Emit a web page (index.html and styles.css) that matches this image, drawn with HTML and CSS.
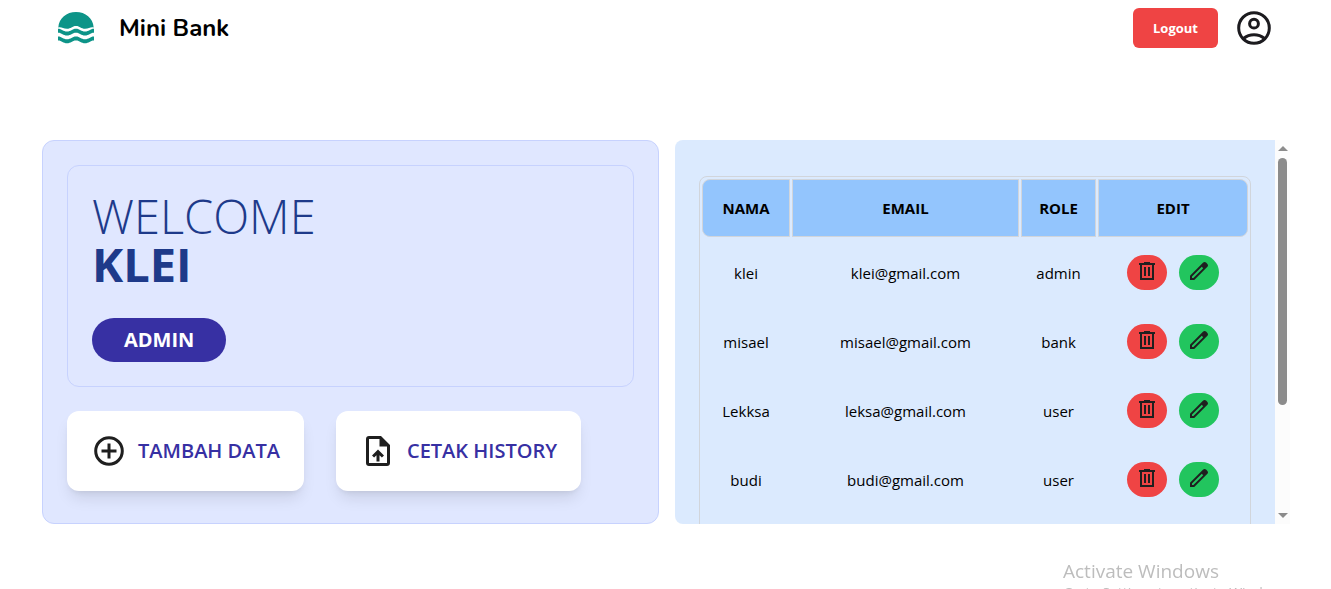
FILE: index.html
```html
<!DOCTYPE html>
<html lang="id">
<head>
<meta charset="utf-8">
<meta name="viewport" content="width=device-width, initial-scale=1">
<title>Mini Bank</title>
<link rel="stylesheet" href="styles.css">
</head>
<body>
<svg class="defs" aria-hidden="true">
  <symbol id="trash" viewBox="0 0 24 24"><path d="M5 21V6H4V4h5V3h6v1h5v2h-1v15H5zM7 19h10V6H7v13zM9 17h2V8H9v9zM13 17h2V8h-2v9z" fill-rule="evenodd"/></symbol>
  <symbol id="pencil" viewBox="0 0 24 24"><path d="M5 19h1.400l9.800-9.800-1.400-1.400L5 17.600V19zm-2 2v-4.250L16.200 3.575c.8-.75 2-.75 2.825 0L20.400 5c.8.8.8 2 0 2.800L7.250 21H3z" fill-rule="evenodd"/></symbol>
</svg>
<header class="navbar">
  <a class="brand" href="#">
    <svg class="logo" viewBox="0 0 36 32" fill="#0d9488" aria-hidden="true">
      <path d="M0.300 15.500C1 6 8.500 0 18 0S35 6 35.700 15.500C32.500 14.500 31 16.800 27 16.800S22 14 18 14 13 16.800 9 16.800 3.500 14.500 0.300 15.500Z"/>
      <path d="M0 16.800C4 16.800 5 19.600 9 19.600S14 16.800 18 16.800 23 19.600 27 19.600 32 16.800 36 16.800V20.800C32 20.800 31 23.600 27 23.600S22 20.800 18 20.800 13 23.600 9 23.600 4 20.800 0 20.800Z"/>
      <path d="M0 24.400C4 24.400 5 27.200 9 27.200S14 24.400 18 24.400 23 27.200 27 27.200 32 24.400 36 24.400V28.400C32 28.400 31 31.200 27 31.200S22 28.400 18 28.400 13 31.200 9 31.200 4 28.400 0 28.400Z"/>
    </svg>
    <span>Mini Bank</span>
  </a>
  <div class="account">
    <button class="logout" type="button">Logout</button>
    <a class="profile" href="#" aria-label="Profile">
      <svg viewBox="0 0 40 40" fill="none" stroke="#1c1b1f" stroke-width="3" aria-hidden="true"><circle cx="20" cy="20" r="15.300"/><circle cx="20" cy="15.700" r="4.400"/><path d="M9.500 30.500C12.500 28 16 26.700 20 26.700S27.500 28 30.500 30.500"/></svg>
    </a>
  </div>
</header>
<main class="dashboard">
  <section class="overview">
    <div class="welcome">
      <h1>WELCOME<strong>KLEI</strong></h1>
      <span class="badge">ADMIN</span>
    </div>
    <div class="actions">
      <button class="action" type="button">
        <svg viewBox="0 0 36 36" fill="none" stroke="#1f1f1f" stroke-width="3" aria-hidden="true"><circle cx="18" cy="18" r="13.300"/><path d="M18 10.500v15M10.500 18h15"/></svg>
        <span>TAMBAH DATA</span>
      </button>
      <button class="action" type="button">
        <svg viewBox="0 0 24 24" fill="#1f1f1f" aria-hidden="true"><path d="M11 19h2v-4.200l1.600 1.600L16 15l-4-4-4 4 1.400 1.400 1.600-1.600V19zM6 22c-1.200 0-2-.8-2-2V4c0-1.200.8-2 2-2h8l6 6v12c0 1.200-.8 2-2 2H6zM13 9V4H6v16h12V9h-5z" fill-rule="evenodd"/></svg>
        <span>CETAK HISTORY</span>
      </button>
    </div>
  </section>
  <section class="users">
    <div class="users-scroll">
      <table>
        <colgroup><col class="c-name"><col class="c-email"><col class="c-role"><col class="c-edit"></colgroup>
        <thead><tr><th scope="col">NAMA</th><th scope="col">EMAIL</th><th scope="col">ROLE</th><th scope="col">EDIT</th></tr></thead>
        <tbody>
          <tr><td>klei</td><td>klei@gmail.com</td><td>admin</td><td><div class="tools"><button class="tool delete" type="button" aria-label="Delete klei"><svg><use href="#trash"/></svg></button><button class="tool edit" type="button" aria-label="Edit klei"><svg><use href="#pencil"/></svg></button></div></td></tr>
          <tr><td>misael</td><td>misael@gmail.com</td><td>bank</td><td><div class="tools"><button class="tool delete" type="button" aria-label="Delete misael"><svg><use href="#trash"/></svg></button><button class="tool edit" type="button" aria-label="Edit misael"><svg><use href="#pencil"/></svg></button></div></td></tr>
          <tr><td>Lekksa</td><td>leksa@gmail.com</td><td>user</td><td><div class="tools"><button class="tool delete" type="button" aria-label="Delete Lekksa"><svg><use href="#trash"/></svg></button><button class="tool edit" type="button" aria-label="Edit Lekksa"><svg><use href="#pencil"/></svg></button></div></td></tr>
          <tr><td>budi</td><td>budi@gmail.com</td><td>user</td><td><div class="tools"><button class="tool delete" type="button" aria-label="Delete budi"><svg><use href="#trash"/></svg></button><button class="tool edit" type="button" aria-label="Edit budi"><svg><use href="#pencil"/></svg></button></div></td></tr>
        </tbody>
        <tfoot><tr><td class="spacer" colspan="4"></td></tr></tfoot>
      </table>
    </div>
    <div class="scrollbar" aria-hidden="true">
      <span class="arrow up"></span>
      <span class="track"><span class="thumb"></span></span>
      <span class="arrow down"></span>
    </div>
  </section>
</main>
<aside class="watermark"><p class="mark-title">Activate Windows</p><p class="mark-text">Go to Settings to activate Windows.</p></aside>
</body>
</html>
```
FILE: styles.css
```css
* { box-sizing: border-box; }
html { height: 100%; overflow: hidden; }
body { margin: 0; height: 100%; background: #fff; color: #000; font: 15px/24px "Segoe UI", "Open Sans", "Noto Sans", sans-serif; }
button { border: 0; padding: 0; font: inherit; cursor: pointer; }
svg { display: block; flex: none; }
.defs { position: absolute; width: 0; height: 0; }

.navbar { display: flex; justify-content: space-between; align-items: center; padding: 8px 57px 8px 58px; }
.brand { display: flex; align-items: center; gap: 25px; color: #000; text-decoration: none; font: 700 24px/32px Nunito, "Noto Sans", sans-serif; }
.logo { width: 36px; height: 32px; }
.account { display: flex; align-items: center; gap: 16px; }
.logout { height: 40px; padding: 0 20px; border-radius: 6px; background: #ef4444; color: #fff; font-size: 13px; font-weight: 700; }
.profile svg { width: 40px; height: 40px; }

.dashboard { display: grid; grid-template-columns: calc(50% - 7px) 1fr; gap: 16px; margin: 84px 41px 0 42px; }
.overview { min-height: 384px; padding: 24px; border: 1px solid #c7d2fe; border-radius: 12px; background: #e0e7ff; }
.welcome { padding: 24px; border: 1px solid #c7d2fe; border-radius: 12px; }
h1 { margin: 0 0 30px; padding-top: 2px; color: #1e3a8a; font-size: 47px; font-weight: 300; line-height: 48px; }
h1 strong { display: block; font-weight: 700; }
.badge { display: block; width: fit-content; padding: 8px 32px; border-radius: 22px; background: #3730a3; color: #fff; font-size: 20px; font-weight: 700; line-height: 28px; }
.actions { display: flex; gap: 32px; margin-top: 24px; }
.action { display: flex; align-items: center; gap: 11px; padding: 22px 24px; border-radius: 12px; background: #fff; color: #3730a3; font-size: 20px; font-weight: 600; box-shadow: 0 10px 15px -3px rgb(0 0 0 / .1), 0 4px 6px -4px rgb(0 0 0 / .1); }
.action svg { width: 36px; height: 36px; }

.users { display: flex; height: 384px; }
.users-scroll { flex: 1; padding: 36px 24px 0; overflow-y: scroll; scrollbar-width: none; border-radius: 8px 0 0 8px; background: #dbeafe; }
table { width: 100%; table-layout: fixed; border: 1px solid #d1d5db; border-radius: 8px; border-collapse: separate; border-spacing: 2px; text-align: center; }
.c-name { width: 88px; }
.c-role { width: 75px; }
.c-edit { width: 150px; }
th { height: 58px; padding: 0; border: 1px solid #d1d5db; background: #93c5fd; font-weight: 700; }
th:first-child { border-radius: 8px 0 0 8px; }
th:last-child { border-radius: 0 8px 8px 0; }
td { height: 67px; padding: 0; }
.spacer { height: 120px; }
.tools { display: flex; justify-content: center; gap: 12px; }
.tool { display: flex; justify-content: center; width: 40px; height: 35px; padding-top: 4px; border-radius: 18px; }
.tool svg { width: 24px; height: 24px; fill: #1f1f1f; }
.delete { background: #ef4444; }
.edit { background: #22c55e; }

.scrollbar { display: flex; flex-direction: column; align-items: center; width: 15px; padding: 6px 0; background: #fcfcfc; }
.track { flex: 1; width: 9px; padding: 7px 0; }
.thumb { display: block; height: 71%; border-radius: 5px; background: #8b8b8b; }
.arrow { border: 5px solid transparent; }
.up { border-top: 0; border-bottom-color: #8b8b8b; }
.down { border-bottom: 0; border-top-color: #8b8b8b; }

.watermark { position: fixed; top: 558px; left: 1063px; width: 208px; height: 80px; overflow: hidden; color: #bdbdbd; pointer-events: none; white-space: nowrap; }
.watermark p { margin: 0; }
.mark-title { font-size: 19px; line-height: 26px; }
.mark-text { font-size: 14px; line-height: 18px; }
```
